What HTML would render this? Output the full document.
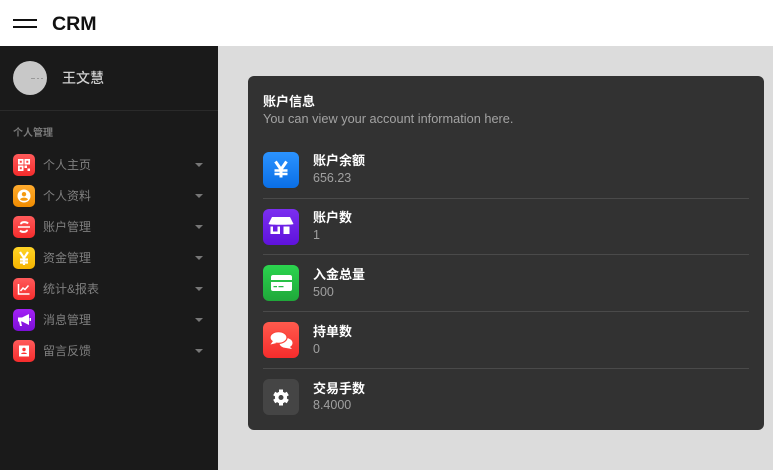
<!DOCTYPE html>
<html><head><meta charset="utf-8"><style>
*{box-sizing:border-box}
html,body{margin:0;padding:0}
body{width:773px;height:470px;overflow:hidden;position:relative;background:#dcdcdc;font-family:"Liberation Sans","Noto Sans CJK SC",sans-serif}
.a{position:absolute;white-space:nowrap}
.side{left:0;top:46px;width:218px;height:424px;background:#1a1a1a}
.m{left:43px;font-size:12px;line-height:16px;color:#7f7f7f}
.ic{left:13px;width:22px;height:22px;border-radius:5px}
.ic svg,.bi svg{position:absolute;left:0;top:0;width:100%;height:100%}
.tri{left:195px;width:0;height:0;border-left:4px solid transparent;border-right:4px solid transparent;border-top:4px solid #777}
.bi{left:263px;width:36px;height:36px;border-radius:6px}
.t{left:313px;font-size:13px;font-weight:bold;line-height:16px;color:#fff}
.v{left:313px;font-size:12.500px;line-height:16px;color:#a0a0a0}
.hr{left:263px;width:486px;height:1px;background:#4a4a4a}
</style></head><body>
<div class="a" style="left:0;top:0;width:773px;height:46px;background:#fff"></div>
<div class="a" style="left:13px;top:19px;width:24px;height:2px;background:#111"></div>
<div class="a" style="left:13px;top:26px;width:24px;height:2px;background:#111"></div>
<div class="a" style="left:52px;top:12px;font-size:19.600px;line-height:24px;font-weight:bold;color:#111">CRM</div>
<div class="a side"></div>
<div class="a" style="left:13px;top:61px;width:34px;height:34px;border-radius:50%;background:#c8c8c8"></div>
<div class="a" style="left:31px;top:78px;width:4px;height:1px;background:#999"></div>
<div class="a" style="left:37px;top:78px;width:2px;height:1px;background:#999"></div>
<div class="a" style="left:41px;top:78px;width:2px;height:1px;background:#999"></div>
<div class="a" style="left:62px;top:69px;font-size:14px;line-height:18px;color:#d0d0d0;font-weight:500">王文慧</div>
<div class="a" style="left:0;top:110px;width:218px;height:1px;background:#2a2a2a"></div>
<div class="a" style="left:13px;top:126px;font-size:10px;line-height:15px;font-weight:bold;color:#7a7a7a">个人管理</div>

<div class="a ic" style="top:154px;background:linear-gradient(#ff5a5a,#f52c2c)"><svg viewBox="0 0 22 22" fill="#fff"><path d="M5 5h5.500v5.500h-5.500zM11.500 5h5.500v5.500h-5.500zM5 11.500h5.500v5.500h-5.500zM11.500 11.500h2.500v2.500h-2.500zM14.500 14.500h2.500v2.500h-2.500z"/><path fill="#f44" d="M6.800 6.800h2v2h-2zM13.300 6.800h2v2h-2zM6.800 13.300h2v2h-2z"/></svg></div>
<div class="a m" style="top:157px">个人主页</div><div class="a tri" style="top:163px"></div>

<div class="a ic" style="top:185px;background:linear-gradient(#ffab2e,#f08c00)"><svg viewBox="0 0 22 22"><circle cx="11" cy="11" r="6.500" fill="#fff"/><circle cx="11" cy="9.200" r="2.200" fill="#f59a10"/><path d="M7 14.500c1-2.500 7-2.500 8 0c-1.500 1.700-6.500 1.700-8 0z" fill="#f59a10"/></svg></div>
<div class="a m" style="top:188px">个人资料</div><div class="a tri" style="top:194px"></div>

<div class="a ic" style="top:216px;background:linear-gradient(#ff5a5a,#f52c2c)"><svg viewBox="0 0 22 22" fill="none" stroke="#fff" stroke-width="2"><path d="M15 7.500c-1.500-2-7-2-7 .8"/><path d="M7 14.500c1.500 2 7 2 7-.8"/><path d="M5 11h12" stroke-width="1.500"/></svg></div>
<div class="a m" style="top:219px">账户管理</div><div class="a tri" style="top:225px"></div>

<div class="a ic" style="top:247px;background:linear-gradient(#ffd426,#f5b400)"><svg viewBox="0 0 22 22" fill="none" stroke="#fff" stroke-width="2.200"><path d="M7 5l4 6 4-6M11 11v7M7 12.500h8M7 15.500h8"/></svg></div>
<div class="a m" style="top:250px">资金管理</div><div class="a tri" style="top:256px"></div>

<div class="a ic" style="top:278px;background:linear-gradient(#ff5a5a,#f52c2c)"><svg viewBox="0 0 22 22" fill="none" stroke="#fff" stroke-width="1.500"><path d="M5.500 6v10h11"/><path d="M7.500 13l2.500-3 2 1.500 3.500-4"/></svg></div>
<div class="a m" style="top:281px">统计&amp;报表</div><div class="a tri" style="top:287px"></div>

<div class="a ic" style="top:309px;background:linear-gradient(#a321f5,#7c0fd8)"><svg viewBox="0 0 22 22" fill="#fff"><path d="M5 8.500h4l7-3.500v11l-7-3.500h-1l1 4.500h-2l-1-4.500h-1z"/><rect x="16.500" y="9" width="1.500" height="3"/></svg></div>
<div class="a m" style="top:312px">消息管理</div><div class="a tri" style="top:318px"></div>

<div class="a ic" style="top:340px;background:linear-gradient(#ff5a5a,#f52c2c)"><svg viewBox="0 0 22 22"><rect x="6" y="5.500" width="10" height="11" fill="#fff"/><circle cx="11" cy="9.500" r="1.700" fill="#f33"/><path d="M8 14c.5-2 5.500-2 6 0z" fill="#f33"/></svg></div>
<div class="a m" style="top:343px">留言反馈</div><div class="a tri" style="top:349px"></div>

<div class="a" style="left:248px;top:76px;width:516px;height:354px;border-radius:6px;background:#323232"></div>
<div class="a" style="left:263px;top:94px;font-size:13px;font-weight:bold;line-height:16px;color:#fff">账户信息</div>
<div class="a" style="left:263px;top:111px;font-size:12.750px;line-height:16px;color:#a3a3a3">You can view your account information here.</div>

<div class="a bi" style="top:152px;background:linear-gradient(#2b93ff,#0a6fe6)"><svg viewBox="0 0 36 36" fill="none" stroke="#fff" stroke-width="3"><path d="M12.500 9.500l5.500 8 5.500-8M18 17v8.500"/><path d="M11.500 18.500h13M11.500 22h13" stroke-width="2.400"/></svg></div>
<div class="a t" style="top:153px">账户余额</div><div class="a v" style="top:170px">656.23</div>
<div class="a hr" style="top:198px"></div>

<div class="a bi" style="top:209px;background:linear-gradient(#7b2ff0,#5f12dc)"><svg viewBox="0 0 36 36" fill="#fff"><path d="M9 8h18l3.500 7c0 1-24.500 1-25 0z"/><path d="M8 17.500h2.500v5h4.500v-5h2.500v7.500h-9.500zM21 17.500h6v7.500h-6z" transform="translate(-.5 0)"/></svg></div>
<div class="a t" style="top:210px">账户数</div><div class="a v" style="top:227px">1</div>
<div class="a hr" style="top:254px"></div>

<div class="a bi" style="top:265px;background:linear-gradient(#2bd44e,#1fa83a)"><svg viewBox="0 0 36 36" fill="#fff"><path d="M8 12c0-1.500 1-2 2-2h17c1 0 2 .5 2 2v3h-21zM8 17h21v7c0 1.500-1 2-2 2h-17c-1 0-2-.5-2-2z"/><path fill="#24b944" d="M10.500 21h3.500v1.300h-3.500zM15.500 21h5v1.300h-5z"/></svg></div>
<div class="a t" style="top:267px">入金总量</div><div class="a v" style="top:284px">500</div>
<div class="a hr" style="top:311px"></div>

<div class="a bi" style="top:322px;background:linear-gradient(#ff5a4d,#f52c2c)"><svg viewBox="0 0 36 36" fill="#fff"><ellipse cx="23" cy="21" rx="6.500" ry="5"/><path d="M26 24l3 3-6-1z"/><ellipse cx="15.500" cy="15.500" rx="8.500" ry="5.800" stroke="#fb4339" stroke-width="1.200"/><path d="M10 19l-2.500 3.500 6-1.500z"/></svg></div>
<div class="a t" style="top:324px">持单数</div><div class="a v" style="top:341px">0</div>
<div class="a hr" style="top:368px"></div>

<div class="a bi" style="top:379px;background:#454545"><svg viewBox="0 0 36 36"><g stroke="#fff" stroke-width="4"><path d="M18 10.500v16M11.200 14.500l13.600 8M11.200 22.500l13.600-8"/></g><circle cx="18" cy="18.500" r="6" fill="#fff"/><circle cx="18" cy="18.500" r="2.500" fill="#454545"/></svg></div>
<div class="a t" style="top:381px">交易手数</div><div class="a v" style="top:397px">8.4000</div>
</body></html>
